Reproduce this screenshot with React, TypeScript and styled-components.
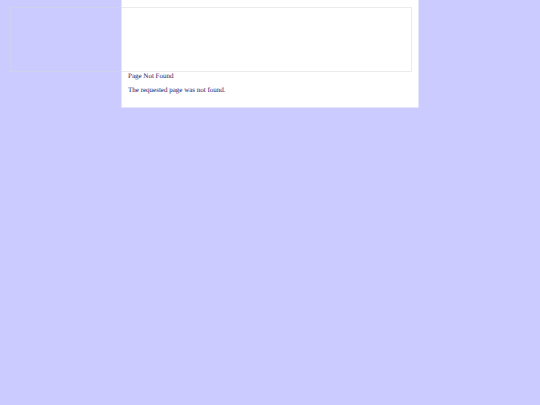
import React from "react";
import styled, { createGlobalStyle } from "styled-components";

const GlobalStyle = createGlobalStyle`
  body {
    margin: 0;
    background: #cbcbff;
    color: #19196e;
    font: 7px/8px "Liberation Serif", "Times New Roman", serif;
    text-rendering: geometricPrecision;
  }
`;

const Page = styled.main`
  box-sizing: border-box;
  width: 55%;
  min-width: 298px;
  margin: 0 auto;
  padding: 7px 6px 13px;
  background: #ffffff;
  border: 1px solid #e4e4fa;
  border-top: 0;
`;

const Banner = styled.header`
  box-sizing: border-box;
  height: 65px;
  margin-left: calc(-50vw + 50% + 10px);
  border: 1px solid rgba(214, 214, 224, 0.5);
`;

const Title = styled.h1`
  margin: 0;
  font: inherit;
`;

const Message = styled.p`
  margin: 6px 0 0;
`;

export default function App() {
  return (
    <>
      <GlobalStyle />
      <Page>
        <Banner />
        <Title>Page Not Found</Title>
        <Message>The requested page was not found.</Message>
      </Page>
    </>
  );
}
